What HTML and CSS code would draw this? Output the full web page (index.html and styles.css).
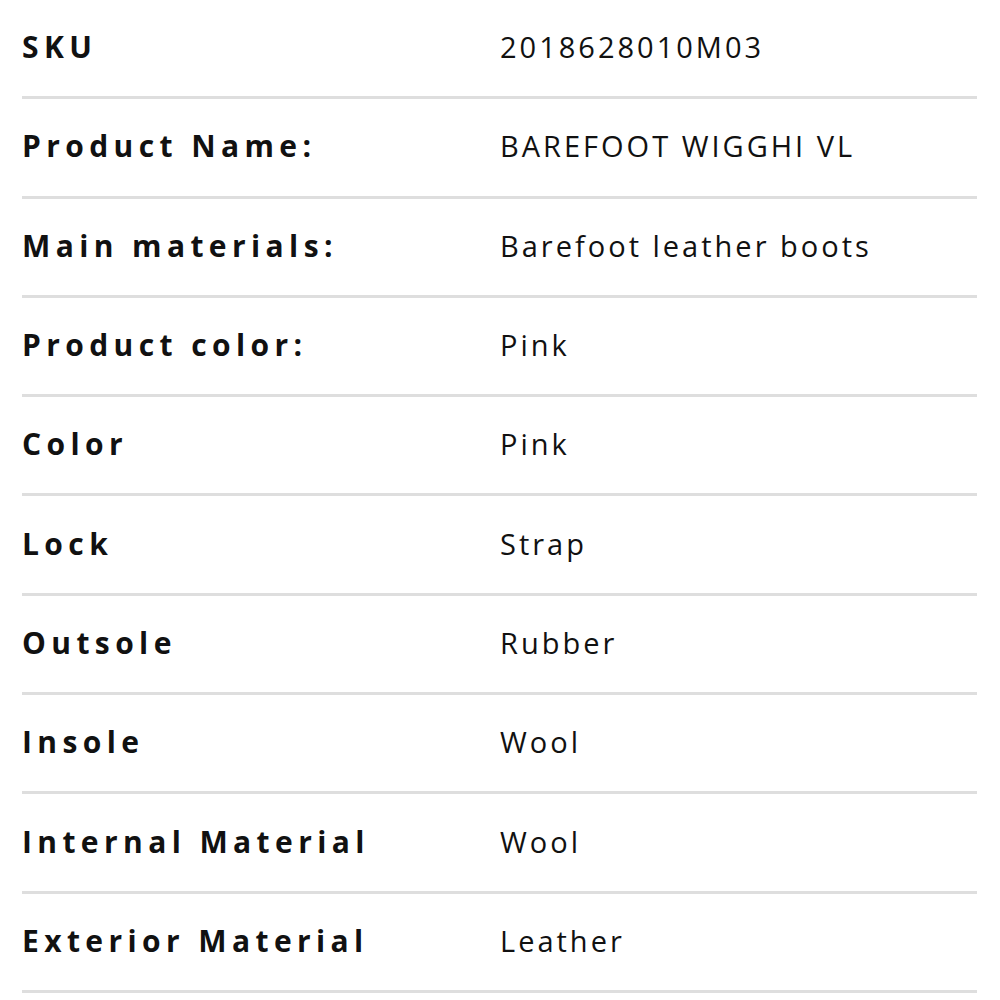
FILE: index.html
```html
<!DOCTYPE html>
<html>
<head>
<meta charset="utf-8">
<link rel="stylesheet" href="styles.css">
</head>
<body>
<div class="specs">
  <div class="row"><div class="label">SKU</div><div class="value">2018628010M03</div></div>
  <div class="row"><div class="label">Product Name:</div><div class="value">BAREFOOT WIGGHI VL</div></div>
  <div class="row"><div class="label">Main materials:</div><div class="value">Barefoot leather boots</div></div>
  <div class="row"><div class="label">Product color:</div><div class="value">Pink</div></div>
  <div class="row"><div class="label">Color</div><div class="value">Pink</div></div>
  <div class="row"><div class="label">Lock</div><div class="value">Strap</div></div>
  <div class="row"><div class="label">Outsole</div><div class="value">Rubber</div></div>
  <div class="row"><div class="label">Insole</div><div class="value">Wool</div></div>
  <div class="row"><div class="label">Internal Material</div><div class="value">Wool</div></div>
  <div class="row"><div class="label">Exterior Material</div><div class="value">Leather</div></div>
</div>
</body>
</html>
```

FILE: styles.css
```css
html, body {
  margin: 0;
  padding: 0;
  background: #ffffff;
}
.specs {
  padding: 0 23px 0 22px;
  font-family: "Open Sans", "Liberation Sans", sans-serif;
  color: #111111;
}
.row {
  box-sizing: border-box;
  height: 99.3px;
  border-bottom: 3px solid #dedede;
  display: grid;
  grid-template-columns: 478px 1fr;
  align-items: center;
  padding-bottom: 2px;
}
.label {
  font-weight: 700;
  font-size: 30px;
  letter-spacing: 5.4px;
  line-height: 40px;
}
.value {
  font-weight: 400;
  font-size: 29px;
  letter-spacing: 3px;
  line-height: 40px;
}
```
